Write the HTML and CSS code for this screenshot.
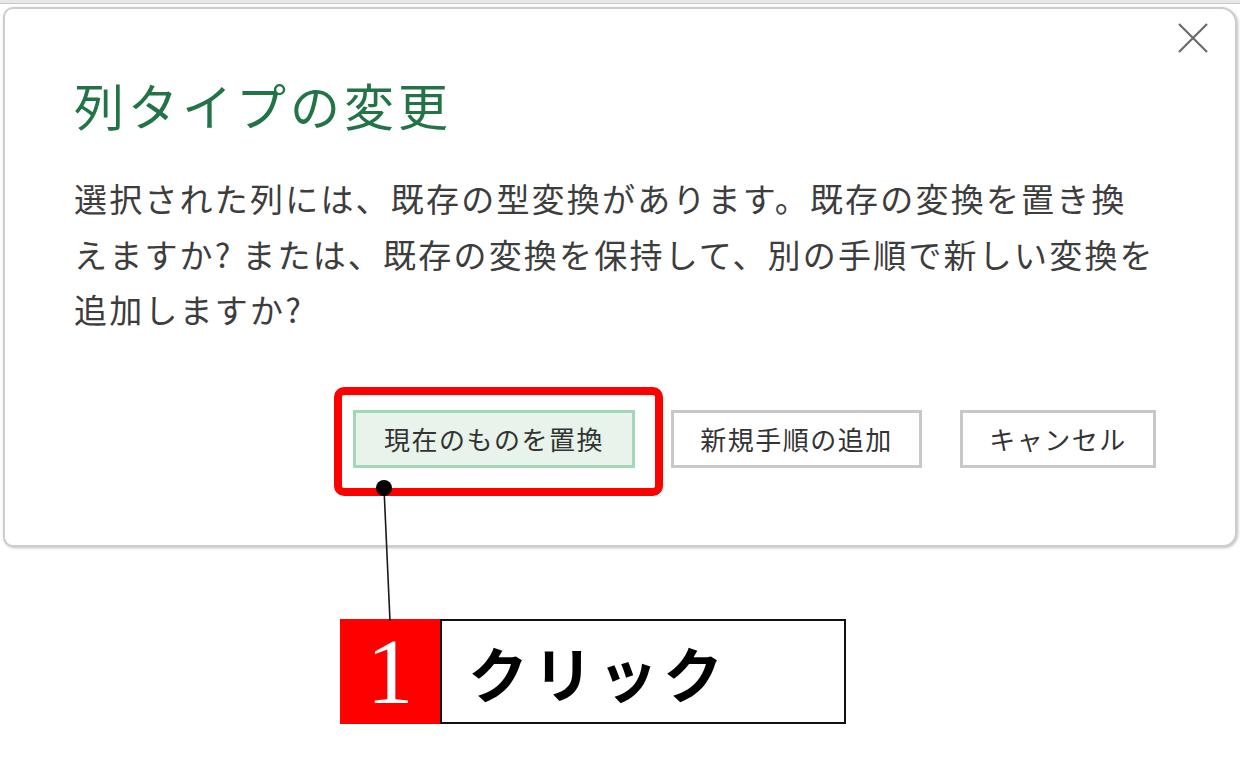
FILE: index.html
```html
<!DOCTYPE html>
<html lang="ja">
<head>
    <meta charset="UTF-8">
    <title>列タイプの変更</title>
    <link rel="stylesheet" href="styles.css">
</head>
<body>
    <div class="screen">
        <div class="top-edge"></div>

        <div class="dialog">
            <button class="close-btn" aria-label="閉じる">
                <svg width="30" height="30" viewBox="0 0 30 30">
                    <path d="M1 1 L29 29 M29 1 L1 29" stroke="#6b6b6b" stroke-width="2.2" fill="none"/>
                </svg>
            </button>

            <h1 class="dialog-title">列タイプの変更</h1>
            <p class="dialog-text">
                選択された列には、既存の型変換があります。既存の変換を置き換<br>
                えますか? または、既存の変換を保持して、別の手順で新しい変換を<br>
                追加しますか?
            </p>

            <div class="dialog-actions">
                <button class="btn btn-primary btn-replace">現在のものを置換</button>
                <button class="btn btn-add">新規手順の追加</button>
                <button class="btn btn-cancel">キャンセル</button>
            </div>
        </div>

        <div class="callout">
            <div class="callout-num">1</div>
            <div class="callout-label">クリック</div>
        </div>

        <!-- annotation overlay -->
        <div class="highlight"></div>
        <svg class="connector" width="1240" height="777" viewBox="0 0 1240 777">
            <line x1="384" y1="488" x2="390" y2="621" stroke="#1a1a1a" stroke-width="1.6"/>
            <circle cx="384" cy="488" r="8" fill="#000"/>
        </svg>
    </div>
</body>
</html>
```

FILE: styles.css
```css
* {
    margin: 0;
    padding: 0;
    box-sizing: border-box;
}

body {
    background-color: #ffffff;
    font-family: "Noto Sans CJK JP", "Noto Sans", sans-serif;
    color: #404040;
}

.screen {
    position: relative;
    width: 1240px;
    height: 777px;
    overflow: hidden;
}

.top-edge {
    height: 4px;
    background-color: #e8e8e8;
    border-bottom: 1px solid #c9c9c9;
}

.dialog {
    position: relative;
    margin: 3px 3px 0 3px;
    height: 540px;
    background-color: #ffffff;
    border: 2px solid #cdcdcd;
    border-radius: 10px 16px 14px 10px;
    box-shadow: 1px 1px 3px rgba(0,0,0,0.25);
    padding: 65px 79px 0 69px;
}

.close-btn {
    position: absolute;
    top: 14px;
    right: 27px;
    width: 30px;
    height: 30px;
    border: none;
    background: none;
    display: flex;
}

.dialog-title {
    font-size: 50px;
    font-weight: 400;
    line-height: 60px;
    letter-spacing: 4px;
    color: #227447;
}

.dialog-text {
    margin-top: 37px;
    font-size: 33px;
    line-height: 55.5px;
    letter-spacing: 2.2px;
    color: #3d3d3d;
    white-space: nowrap;
}

.dialog-actions {
    display: flex;
    justify-content: flex-end;
    gap: 36px;
    margin-top: 72px;
}

.btn {
    height: 58px;
    font-family: inherit;
    font-size: 26px;
    letter-spacing: 1.5px;
    color: #333333;
    background-color: #ffffff;
    border: 3px solid #c8c8c8;
    display: flex;
    align-items: center;
    justify-content: center;
}

.btn-primary {
    background-color: #e7f3eb;
    border-color: #a3d7b5;
}

.btn-replace { width: 282px; }
.btn-add { width: 251px; }
.btn-cancel { width: 196px; margin-left: 2px; }

/* step label under the dialog */
.callout {
    display: flex;
    margin: 72px 0 0 340px;
    height: 105px;
}

.callout-num {
    width: 100px;
    background-color: #ff0000;
    color: #ffffff;
    font-family: "Liberation Serif", serif;
    font-size: 94px;
    line-height: 105px;
    text-align: center;
}

.callout-label {
    width: 406px;
    border: 2px solid #111111;
    padding-left: 26px;
    display: flex;
    align-items: center;
    font-size: 60px;
    font-weight: 700;
    letter-spacing: 5px;
    color: #000000;
}

.highlight {
    position: absolute;
    left: 334px;
    top: 387px;
    width: 329px;
    height: 109px;
    border: 8px solid #ff0000;
    border-radius: 10px;
}

.connector {
    position: absolute;
    left: 0;
    top: 0;
    pointer-events: none;
}
```
